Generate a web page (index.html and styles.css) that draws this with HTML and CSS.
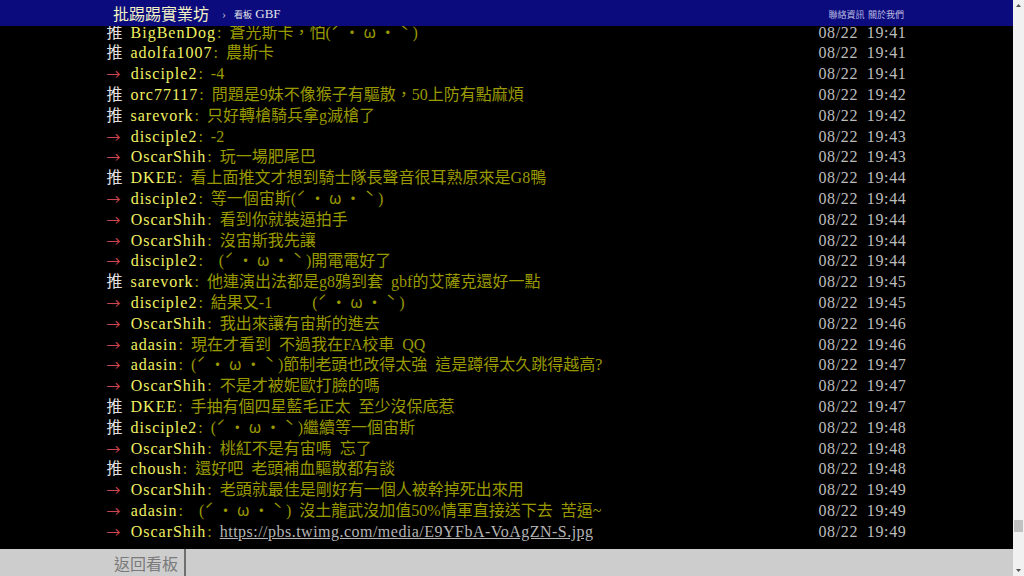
FILE: index.html
```html
<!DOCTYPE html>
<html lang="zh-Hant">
<head>
<meta charset="utf-8">
<title>看板 GBF - 批踢踢實業坊</title>
<link rel="stylesheet" href="styles.css">
</head>
<body>
<div class="window">
  <div class="page">
    <header class="topbar">
      <div class="topbar-inner">
        <a class="logo" href="#">批踢踢實業坊</a>
        <span class="crumb-sep">›</span>
        <a class="board" href="#"><span class="board-label">看板</span> GBF</a>
        <nav class="top-links">
          <a class="small" href="#">聯絡資訊</a>
          <a class="small" href="#">關於我們</a>
        </nav>
      </div>
    </header>
    <main class="main">
      <div class="pushes">
        <div class="push"><span class="push-main"><span class="push-tag">推 </span><span class="push-userid">BigBenDog</span><span class="push-content">: 蒼光斯卡，怕(<span class="kao">ˊ・ω・ˋ</span>)</span></span><span class="push-time">08/22 19:41</span></div>
        <div class="push"><span class="push-main"><span class="push-tag">推 </span><span class="push-userid">adolfa1007</span><span class="push-content">: 農斯卡</span></span><span class="push-time">08/22 19:41</span></div>
        <div class="push"><span class="push-main"><span class="push-tag arrow">→ </span><span class="push-userid">disciple2</span><span class="push-content">: -4</span></span><span class="push-time">08/22 19:41</span></div>
        <div class="push"><span class="push-main"><span class="push-tag">推 </span><span class="push-userid">orc77117</span><span class="push-content">: 問題是9妹不像猴子有驅散，50上防有點麻煩</span></span><span class="push-time">08/22 19:42</span></div>
        <div class="push"><span class="push-main"><span class="push-tag">推 </span><span class="push-userid">sarevork</span><span class="push-content">: 只好轉槍騎兵拿g滅槍了</span></span><span class="push-time">08/22 19:42</span></div>
        <div class="push"><span class="push-main"><span class="push-tag arrow">→ </span><span class="push-userid">disciple2</span><span class="push-content">: -2</span></span><span class="push-time">08/22 19:43</span></div>
        <div class="push"><span class="push-main"><span class="push-tag arrow">→ </span><span class="push-userid">OscarShih</span><span class="push-content">: 玩一場肥尾巴</span></span><span class="push-time">08/22 19:43</span></div>
        <div class="push"><span class="push-main"><span class="push-tag">推 </span><span class="push-userid">DKEE</span><span class="push-content">: 看上面推文才想到騎士隊長聲音很耳熟原來是G8鴨</span></span><span class="push-time">08/22 19:44</span></div>
        <div class="push"><span class="push-main"><span class="push-tag arrow">→ </span><span class="push-userid">disciple2</span><span class="push-content">: 等一個宙斯(<span class="kao">ˊ・ω・ˋ</span>)</span></span><span class="push-time">08/22 19:44</span></div>
        <div class="push"><span class="push-main"><span class="push-tag arrow">→ </span><span class="push-userid">OscarShih</span><span class="push-content">: 看到你就裝逼拍手</span></span><span class="push-time">08/22 19:44</span></div>
        <div class="push"><span class="push-main"><span class="push-tag arrow">→ </span><span class="push-userid">OscarShih</span><span class="push-content">: 沒宙斯我先讓</span></span><span class="push-time">08/22 19:44</span></div>
        <div class="push"><span class="push-main"><span class="push-tag arrow">→ </span><span class="push-userid">disciple2</span><span class="push-content">:  (<span class="kao">ˊ・ω・ˋ</span>)開電電好了</span></span><span class="push-time">08/22 19:44</span></div>
        <div class="push"><span class="push-main"><span class="push-tag">推 </span><span class="push-userid">sarevork</span><span class="push-content">: 他連演出法都是g8鴉到套 gbf的艾薩克還好一點</span></span><span class="push-time">08/22 19:45</span></div>
        <div class="push"><span class="push-main"><span class="push-tag arrow">→ </span><span class="push-userid">disciple2</span><span class="push-content">: 結果又-1     (<span class="kao">ˊ・ω・ˋ</span>)</span></span><span class="push-time">08/22 19:45</span></div>
        <div class="push"><span class="push-main"><span class="push-tag arrow">→ </span><span class="push-userid">OscarShih</span><span class="push-content">: 我出來讓有宙斯的進去</span></span><span class="push-time">08/22 19:46</span></div>
        <div class="push"><span class="push-main"><span class="push-tag arrow">→ </span><span class="push-userid">adasin</span><span class="push-content">: 現在才看到 不過我在FA校車 QQ</span></span><span class="push-time">08/22 19:46</span></div>
        <div class="push"><span class="push-main"><span class="push-tag arrow">→ </span><span class="push-userid">adasin</span><span class="push-content">: (<span class="kao">ˊ・ω・ˋ</span>)節制老頭也改得太強 這是蹲得太久跳得越高?</span></span><span class="push-time">08/22 19:47</span></div>
        <div class="push"><span class="push-main"><span class="push-tag arrow">→ </span><span class="push-userid">OscarShih</span><span class="push-content">: 不是才被妮歐打臉的嗎</span></span><span class="push-time">08/22 19:47</span></div>
        <div class="push"><span class="push-main"><span class="push-tag">推 </span><span class="push-userid">DKEE</span><span class="push-content">: 手抽有個四星藍毛正太 至少沒保底惹</span></span><span class="push-time">08/22 19:47</span></div>
        <div class="push"><span class="push-main"><span class="push-tag">推 </span><span class="push-userid">disciple2</span><span class="push-content">: (<span class="kao">ˊ・ω・ˋ</span>)繼續等一個宙斯</span></span><span class="push-time">08/22 19:48</span></div>
        <div class="push"><span class="push-main"><span class="push-tag arrow">→ </span><span class="push-userid">OscarShih</span><span class="push-content">: 桃紅不是有宙嗎 忘了</span></span><span class="push-time">08/22 19:48</span></div>
        <div class="push"><span class="push-main"><span class="push-tag">推 </span><span class="push-userid">choush</span><span class="push-content">: 還好吧 老頭補血驅散都有談</span></span><span class="push-time">08/22 19:48</span></div>
        <div class="push"><span class="push-main"><span class="push-tag arrow">→ </span><span class="push-userid">OscarShih</span><span class="push-content">: 老頭就最佳是剛好有一個人被幹掉死出來用</span></span><span class="push-time">08/22 19:49</span></div>
        <div class="push"><span class="push-main"><span class="push-tag arrow">→ </span><span class="push-userid">adasin</span><span class="push-content">:  (<span class="kao">ˊ・ω・ˋ</span>) 沒土龍武沒加值50%情軍直接送下去 苦逼~</span></span><span class="push-time">08/22 19:49</span></div>
        <div class="push"><span class="push-main"><span class="push-tag arrow">→ </span><span class="push-userid">OscarShih</span><span class="push-content">: <a class="push-link" href="#">https://pbs.twimg.com/media/E9YFbA-VoAgZN-S.jpg</a></span></span><span class="push-time">08/22 19:49</span></div>
      </div>
    </main>
    <footer class="footer">
      <div class="footer-inner">
        <a class="back" href="#">返回看板</a>
      </div>
    </footer>
  </div>
  <div class="scrollbar">
    <span class="sb-btn"><svg width="5" height="3" viewBox="0 0 5 3"><polygon points="2.5,0 5,3 0,3" fill="#505050"/></svg></span>
    <span class="sb-track"><span class="sb-thumb"></span></span>
    <span class="sb-btn"><svg width="5" height="3" viewBox="0 0 5 3"><polygon points="0,0 5,0 2.5,3" fill="#505050"/></svg></span>
  </div>
</div>
</body>
</html>
```

FILE: styles.css
```css
html, body {
  margin: 0;
  padding: 0;
  height: 100%;
}

body {
  background: #000;
  overflow: hidden;
  font-family: "Liberation Serif", "Noto Sans CJK TC", serif;
}

a {
  text-decoration: none;
}

.window {
  display: flex;
  height: 100vh;
}

.page {
  flex: 1;
  min-width: 0;
  display: flex;
  flex-direction: column;
}

/* top bar */
.topbar {
  flex: none;
  height: 26px;
  background: #0b0b7e;
  position: relative;
  z-index: 1;
}

.topbar-inner {
  width: 800px;
  height: 100%;
  margin: 0 auto;
  box-sizing: border-box;
  padding: 0 2.5px 0 6.5px;
  display: flex;
  align-items: center;
}

.logo {
  font-family: "Noto Sans CJK TC", sans-serif;
  font-size: 16px;
  line-height: 26px;
  color: #f2f2c4;
}

.crumb-sep {
  font-size: 12px;
  color: #b8b8c8;
  margin: 2px 8px 0 13px;
}

.board {
  font-size: 13px;
  color: #e2e2e8;
  margin-top: 1px;
}

.board-label {
  font-family: "Noto Sans CJK TC", sans-serif;
  font-size: 9px;
}

.top-links {
  margin-left: auto;
  display: flex;
  gap: 3.4px;
  margin-top: 2px;
}

.small {
  font-family: "Noto Sans CJK TC", sans-serif;
  font-size: 9px;
  color: #bcbce0;
}

/* push list */
.main {
  flex: 1;
  overflow: hidden;
}

.pushes {
  width: 800px;
  margin: -3.4px auto 0;
}

.push {
  display: flex;
  height: 20.8px;
  font-size: 16px;
  line-height: 20.8px;
  word-spacing: 4px;
}

.push-main {
  flex: 1;
  min-width: 0;
  white-space: pre;
}

.push-tag {
  color: #e2e2e2;
}

.push-tag.arrow {
  font-family: "Noto Sans CJK TC", sans-serif;
  font-size: 14px;
  line-height: 1;
  letter-spacing: 1.5px;
  color: #cc4450;
}

.push-userid {
  color: #f0f062;
  letter-spacing: 1px;
}

.push-content {
  color: #999900;
  padding-left: 1px;
}

.kao {
  font-family: "Noto Sans CJK TC", sans-serif;
  font-feature-settings: "fwid";
  letter-spacing: 3.6px;
  line-height: 1;
}

.push-link {
  color: #b4b4b4;
  text-decoration: underline;
  letter-spacing: 0.48px;
}

.push-time {
  flex: none;
  white-space: pre;
  color: #bdbdbd;
  letter-spacing: 0.65px;
}

/* footer */
.footer {
  flex: none;
  height: 27px;
  background: #cdcdcd;
}

.footer-inner {
  width: 800px;
  height: 100%;
  margin: 0 auto;
  display: flex;
}

.back {
  display: flex;
  align-items: center;
  padding: 0 6px 0 7.5px;
  border-right: 2px solid #6f6f6f;
  font-family: "Noto Sans CJK TC", sans-serif;
  font-size: 16px;
  color: #7a7a7a;
}

/* scrollbar */
.scrollbar {
  flex: none;
  width: 11px;
  background: #f1f1f1;
  display: flex;
  flex-direction: column;
}

.sb-btn {
  height: 11px;
  display: flex;
  align-items: center;
  justify-content: center;
}

.sb-btn svg {
  display: block;
}

.sb-track {
  flex: 1;
}

.sb-thumb {
  display: block;
  height: 12px;
  margin: 509px 1px 0;
  background: #c1c1c1;
}
```
